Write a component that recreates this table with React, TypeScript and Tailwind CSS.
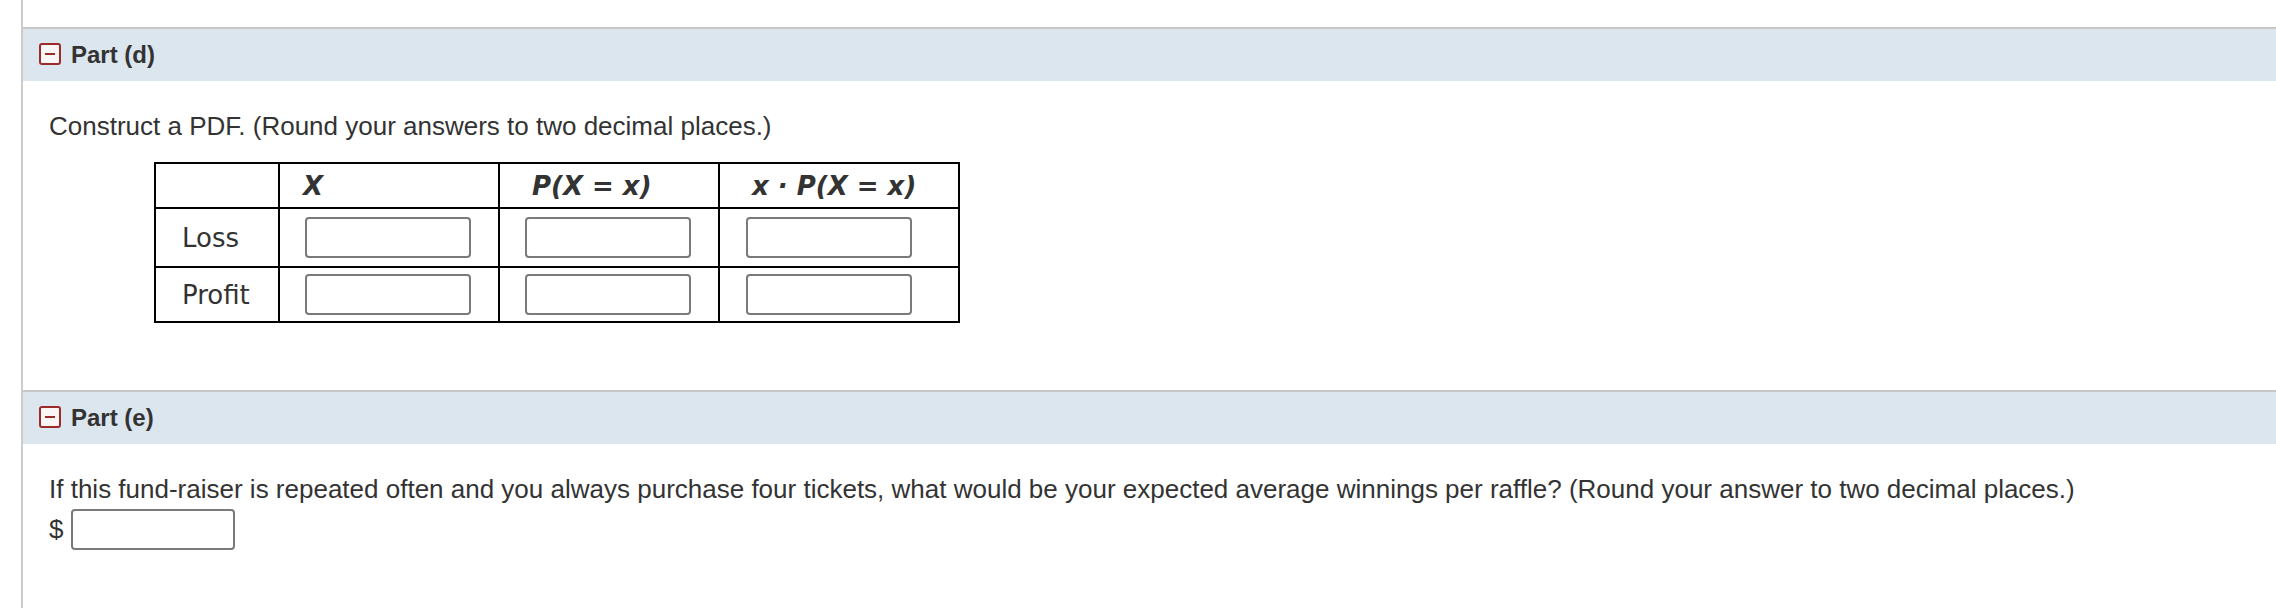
import React from 'react';

const bodyFont = "font-['Liberation_Sans',Arial,sans-serif]";
const tableFont = "font-['DejaVu_Sans',Verdana,sans-serif]";

// collapse icon on each part header
const MinusBox: React.FC = () => (
    <span className="flex h-[22px] w-[22px] shrink-0 items-center justify-center rounded-[3px] border-2 border-[#9d2b2b] bg-[#fbf6f6] mb-[2px]">
        <span className="block h-[2px] w-[10px] bg-[#9d2b2b]" />
    </span>
);

const PartHeader: React.FC<{ label: string }> = ({ label }) => (
    <div className="flex h-[54px] items-center gap-[10px] border-t-2 border-[#c8c8c8] bg-[#dce6ef] pl-[16px]">
        <MinusBox />
        <span className="text-[24px] font-bold text-[#333]">{label}</span>
    </div>
);

const AnswerBox: React.FC<{ wide?: boolean }> = ({ wide }) => (
    <input
        type="text"
        className={wide
            ? "block h-[41px] w-[166px] rounded-[4px] border-2 border-[#7a7a7a] bg-white outline-none"
            : "block h-[41px] w-[164px] rounded-[4px] border-2 border-[#7a7a7a] bg-white outline-none"}
    />
);

const rows = ["Loss", "Profit"];

const App: React.FC = () => {
    return (
        <div className={`min-h-[608px] bg-white text-[#333] ${bodyFont}`}>
            <div className="ml-[21px] min-h-[608px] border-l-2 border-[#cccccc] pt-[27px]">
                {/* Part (d) */}
                <section>
                    <PartHeader label="Part (d)" />
                    <div className="pl-[26px] pt-[27px]">
                        <p className="text-[26px] leading-[36px]">
                            Construct a PDF. (Round your answers to two decimal places.)
                        </p>
                        <table className={`ml-[105px] mt-[18px] w-[804px] table-fixed border-collapse border-2 border-black text-[26px] text-[#333] ${tableFont}`}>
                            <colgroup>
                                <col className="w-[124px]" />
                                <col className="w-[220px]" />
                                <col className="w-[220px]" />
                                <col className="w-[240px]" />
                            </colgroup>
                            <thead>
                                <tr className="h-[45px]">
                                    <th className="border-2 border-black" />
                                    <th className="border-2 border-black pl-[23px] text-left font-bold italic leading-[30px]">X</th>
                                    <th className="border-2 border-black pl-[32px] text-left font-bold italic leading-[30px]">P(X = x)</th>
                                    <th className="border-2 border-black pl-[32px] text-left font-bold italic leading-[30px]">x · P(X = x)</th>
                                </tr>
                            </thead>
                            <tbody>
                                {rows.map((r, i) => (
                                    <tr key={r} className={i === 0 ? "h-[59px]" : "h-[55px]"}>
                                        <td className="border-2 border-black pl-[26px] align-middle leading-[30px]">{r}</td>
                                        <td className="border-2 border-black pl-[25px] align-middle"><AnswerBox wide /></td>
                                        <td className="border-2 border-black pl-[25px] align-middle"><AnswerBox wide /></td>
                                        <td className="border-2 border-black pl-[26px] align-middle"><AnswerBox wide /></td>
                                    </tr>
                                ))}
                            </tbody>
                        </table>
                    </div>
                </section>

                {/* Part (e) */}
                <section className="mt-[67px]">
                    <PartHeader label="Part (e)" />
                    <div className="pl-[26px] pt-[27px]">
                        <p className="text-[26px] leading-[36px]">
                            If this fund-raiser is repeated often and you always purchase four tickets, what would be your expected average winnings per raffle? (Round your answer to two decimal places.)
                        </p>
                        <div className="mt-[2px] flex items-center gap-[8px] text-[26px]">
                            <span>$</span>
                            <AnswerBox />
                        </div>
                    </div>
                </section>
            </div>
        </div>
    );
};

export default App;
